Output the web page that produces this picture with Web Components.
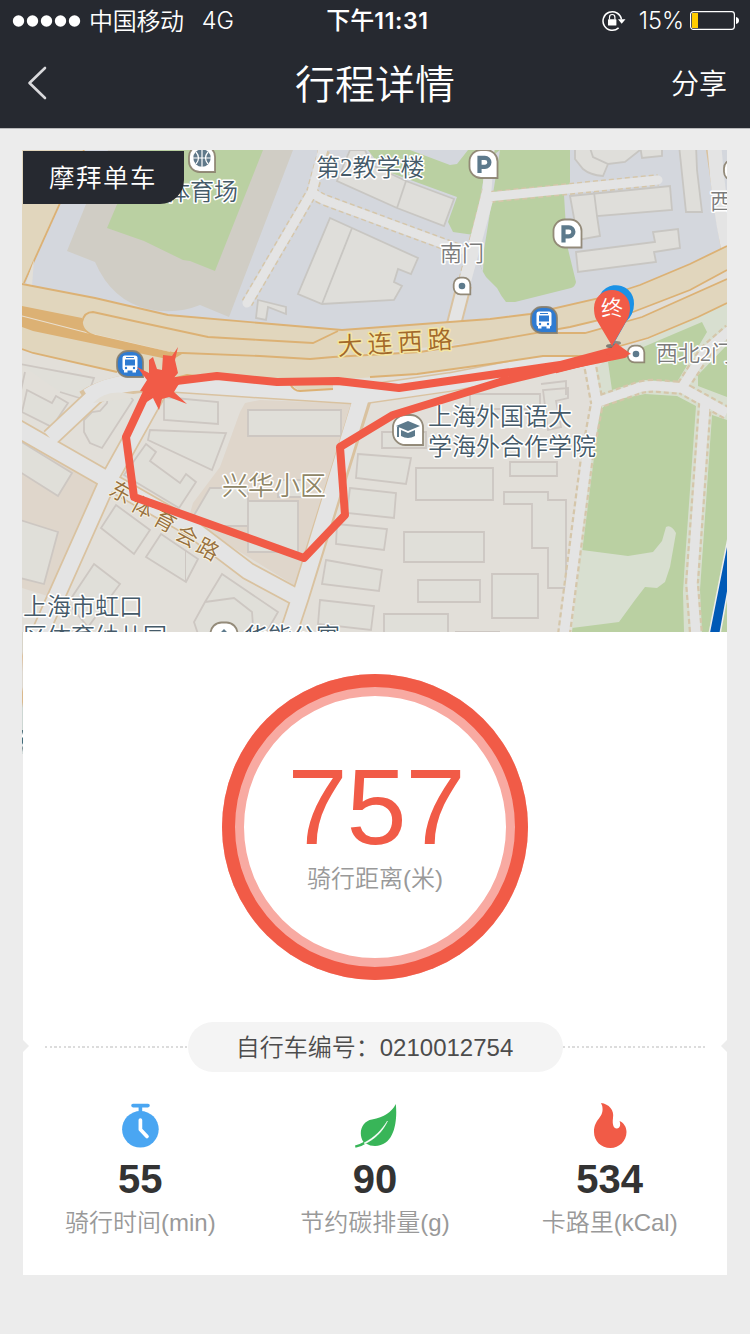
<!DOCTYPE html>
<html lang="zh-CN">
<head>
<meta charset="utf-8">
<title>行程详情</title>
<style>
html,body{margin:0;padding:0}
body{width:750px;height:1334px;overflow:hidden;background:#ececec;font-family:"Liberation Sans","Noto Sans CJK SC",sans-serif;font-weight:350}
</style>
</head>
<body>
<ride-page></ride-page>
<script>
const define = (name, html) => customElements.define(name, class extends HTMLElement {
  constructor() {
    super();
    const t = document.createElement('template');
    t.innerHTML = html;
    this.attachShadow({mode: 'open'}).appendChild(t.content.cloneNode(true));
  }
});

define('status-bar', `<style>
:host{display:grid;grid-template-columns:1fr auto 1fr;align-items:center;height:40px;color:#fff;font:400 23.5px/40px Inter,"Noto Sans CJK SC",sans-serif;padding:0 11px 0 12px}
.l,.r{display:flex;align-items:center;height:40px}
.r{justify-content:flex-end}
.cn{font-family:"Noto Sans CJK SC",sans-serif;font-weight:350;font-size:24px;margin:-2px 0 0 8px;letter-spacing:-.3px}
.net{margin-left:18px;font-weight:350;font-size:23.5px}
.time{font-weight:600;font-size:23px;transform:translateX(2px);letter-spacing:.65px;white-space:nowrap}
.time b{font:500 24px/38px "Noto Sans CJK SC",sans-serif;letter-spacing:0}
.pct{font-weight:350;margin:0 6px 0 13px}
svg{display:block;flex:none}
</style>
<div class="l"><svg width="69" height="12"><g fill="#fff"><circle cx="6.5" cy="6" r="5.7"/><circle cx="20.5" cy="6" r="5.7"/><circle cx="34.5" cy="6" r="5.7"/><circle cx="48.5" cy="6" r="5.7"/><circle cx="62.5" cy="6" r="5.7"/></g></svg><span class="cn">中国移动</span><span class="net">4G</span></div>
<div class="time"><b>下午</b>11:31</div>
<div class="r"><svg width="24" height="22" viewBox="0 0 24 22"><path d="M16.6 17.9A9.3 9.3 0 1 1 19.5 9.5" fill="none" stroke="#fff" stroke-width="1.5"/><path d="M16 9.2h7.5l-3.8 4.6z" fill="#fff"/><rect x="6" y="9.2" width="8.4" height="6.3" rx=".6" fill="#fff"/><path d="M7.5 9.5V7.2a2.7 2.7 0 0 1 5.4 0v2.3" fill="none" stroke="#fff" stroke-width="1.2"/></svg>
<span class="pct">15%</span>
<svg width="49" height="19" viewBox="0 0 49 19"><rect x=".6" y=".6" width="43.8" height="17.8" rx="2.8" fill="none" stroke="#fff" stroke-width="1.2"/><rect x="2" y="2" width="6" height="15" fill="#fc0"/><path d="M46 6q3 .7 3 3.5t-3 3.5z" fill="#fff"/></svg></div>`);

define('nav-bar', `<style>
:host{display:grid;grid-template-columns:1fr auto 1fr;align-items:center;height:88px;color:#fff;font-weight:350;font-family:"Noto Sans CJK SC",sans-serif;padding:0 23px 0 27px;border-bottom:1px solid #b8b8ba;box-sizing:border-box}
svg{display:block;transform:translateY(-1px)}
.t{font-size:40px;line-height:60px;transform:translate(-2px,-2px)}
.s{font-size:28px;line-height:60px;text-align:right;transform:translateY(-2px)}
</style><svg width="20" height="34" viewBox="0 0 20 34"><path d="M18 2L2.5 17L18 32" fill="none" stroke="#d9d9dc" stroke-width="2.6" stroke-linecap="round" stroke-linejoin="round"/></svg>
<div class="t"><slot name="title"></slot></div><div class="s"><slot name="action"></slot></div>`);

const P = (cx, cy, r, fill, inner) => {
  const k = r * .82, s = r - k;
  return `<g transform="translate(${cx} ${cy})"><path d="M${r} ${r}H${-s}A${k} ${k} 0 0 1 ${-r} ${s}V${-s}A${k} ${k} 0 0 1 ${-s} ${-r}H${s}A${k} ${k} 0 0 1 ${r} ${-s}Z" fill="${fill}" stroke="#8a7f6d" stroke-opacity=".9" stroke-width="1.8"/>${inner}</g>`;
};
const bus = '<rect x="-7.500" y="-8.500" width="15" height="15" rx="2.500" fill="#fff"/><rect x="-5" y="-4.500" width="10" height="6" fill="#2e7bd2"/><rect x="-4" y="-7" width="8" height="1" fill="#2e7bd2"/><circle cx="-4" cy="4" r="1.200" fill="#2e7bd2"/><circle cx="4" cy="4" r="1.200" fill="#2e7bd2"/><path d="M-6 6h3.500v2.500h-3.500zM2.500 6h3.500v2.500h-3.500z" fill="#fff"/>';
const parking = '<path d="M-4 9V-6.2H1.4a4.5 4.5 0 0 1 0 9H-4" fill="none" stroke="#5d7a8c" stroke-width="4.200"/>';
const chars = (s, pts, rot, dy) => [...s].map((c, i) => `<text text-anchor="middle" transform="translate(${pts[i]}) rotate(${rot})" y="${dy}">${c}</text>`).join('');

define('route-map', `<style>
:host{display:block;width:705px;height:482px;overflow:hidden}
svg{display:block}
text{font-family:"Noto Sans CJK SC",sans-serif;font-weight:350;font-size:24px;fill:#455a69;stroke:#fff;stroke-width:3px;stroke-linejoin:round;paint-order:stroke}
.num{font-family:"Liberation Serif",serif}
.b{fill:#dfdeda;stroke:#c8c6c2;stroke-width:1.8}
.h{fill:#e0dfd9;stroke:#cdc7c2;stroke-width:1.8}
.e{fill:none;stroke:#dcb174;stroke-width:1.8}
.c{fill:none;stroke:#d9c2a0}
.r{fill:none;stroke:#e4e4e4}
.d{fill:none;stroke:#d5c6aa;stroke-dasharray:5 3}
.g{fill:#bad0a2}
text.gray{fill:#7b7b7b;font-size:22px}
.road text{fill:#a3692a;font-size:25px;stroke:#f5e6a1}
.brown text{fill:#98713d;font-size:22px;stroke:#f5f0e2;stroke-width:2px}
</style>
<svg width="705" height="482" viewBox="22 150 705 482">
<rect x="22" y="150" width="705" height="482" fill="#e2dfd9"/>
<path d="M22 150H727V250L600 305L342 335L22 300Z" fill="#d4d7dd"/>
<path d="M22 150H84L24 283H22Z" fill="#e1d6bd"/>
<path d="M84 150L24 283" class="e"/><path d="M26 283L34 260L32 286Z" fill="#e2dfd8"/>
<path d="M108 150L67 251L95 262Q112 301 148 309Q175 315 200 305L229 317L293 150Z" fill="#d0cdc5"/>
<path class="g" d="M140 150L107 228L144 241L183 260L190 261L215 271L263 150Z"/>
<path class="g" d="M368 150H410L450 165L457 164L468 150H570V182L564 195L567 245L576 282Q575 287 571 288L515 302H506Q501 296 497 288L486 277Q476 262 474 235L453 232L448 222L457 197L383 170Z"/>
<path d="M474 232L487 160L500 150L484 250L483 272L474 250Z" fill="#d4d7dd"/>
<!-- campus paths -->
<g class="d" stroke-width="12"><path d="M324 150L312 192L247 303M312 192Q318 198 330 202L460 250M488 190L463 285M490 197L658 180"/></g>
<g class="r" stroke-width="9" stroke-linecap="round"><path d="M324 145L312 192L247 303M312 192Q318 198 330 202L460 250M490 150L487 190L463 285M488 197L658 180"/></g>
<path d="M464 285L453 328" class="c" stroke-width="16"/><path d="M487 200L464 285L453 328" class="r" stroke-width="12"/>
<path d="M706 140L724 260" class="c" stroke-width="3"/><path d="M714 140Q718 200 728 248" class="r" stroke-width="14"/>
<!-- campus buildings -->
<path class="b" d="M350 150L337 181L397 208L444 226L454 199L406 181L372 165L365 150ZM397 208L406 181"/>
<path class="b" d="M330 218L418 258L411 274L398 269L394 282L402 286L394 300L322 304L298 294ZM352 228L322 304"/>
<path class="b" d="M258 300L286 307V314L268 307L266 320L256 318Z"/>
<path class="b" d="M575 145V159L583 169Q590 175 603 176L608 164L593 157L589 145ZM589 145L593 157L608 164L625 162L640 150V145M640 145L642 158L662 156V145M679 145L686 212H702L697 170L696 145"/>
<path class="b" d="M570 196L670 186L672 210L597 216L600 236L578 240ZM594 192L597 216"/>
<path class="b" d="M576 252L655 242L653 232L678 229L680 248L654 252L656 262L578 272Z"/>
<!-- residential blocks -->
<path fill="#dfd6cb" d="M260 400L245 403L240 412L220 467L193 503L188 520L297 587L354 404Z"/>
<path fill="#dfd6cb" d="M22 440L100 483L54 598L22 588Z"/>
<g class="h"><path d="M248 410H341V436H248ZM248 501H298V552H248ZM278 480H302V497H278ZM193 517L210 488H248V526H193Z"/>
<path d="M358 454L411 458L406 484L356 478ZM350 488L396 493L394 518L347 513ZM337 524L387 529L384 550L336 544ZM326 560L382 570L379 591L322 584ZM320 600L374 606L371 630L318 624Z"/>
<path d="M416 468H493V500H416ZM404 532H484V562H404ZM418 580H480V602H418ZM384 614H448V640H384ZM382 432H426V448H382ZM510 462H557V476H510ZM492 574H538V618H492ZM470 394H540V409H470ZM455 632H500"/>
<path d="M504 492H548V500H566V588H548V548H532V504H504ZM543 390L548 430L561 427L556 401L568 398V388ZM541 384L566 381V395"/>
<path d="M27 390L52 403L56 396L68 403L52 427L22 412ZM84 420L92 412L100 411L107 403L108 393L130 396L133 400L102 448L90 443L84 432ZM164 397L218 402V424L164 420ZM150 430L226 433L212 470L148 440ZM146 444L156 452L150 461L180 483L186 474L196 482L179 508L124 475Z"/>
<path d="M116 505L150 530L134 554L101 528ZM161 534L198 559L186 582L146 557ZM20 441L72 473L58 496L20 472ZM20 520L58 532L44 584L20 578ZM94 564L120 584L88 627L68 603ZM222 574L278 612L262 640H200L194 622L205 602ZM205 602L234 598L252 612L254 640M20 364L94 378L86 400L60 392M25 372L20 395"/><path d="M185.500 551V581" stroke-width="1"/></g>
<!-- east park -->
<path fill="#d8dfd0" d="M608 358L727 303V632H572L596 410L595 370Z"/>
<path class="g" d="M608 362L702 322L707 332L677 382L645 380L612 390ZM698 375L727 345V397L698 386ZM600 410L610 401L645 394L677 396L696 406L685 560L683 592L684 632H572Z"/>
<path class="g" d="M712 415L727 420V632H702L700 590Z"/>
<path fill="#d8dfd0" d="M582 550L628 556L653 552L662 541L666 527Q671 524 676 533L670 567L665 582L657 588L645 587L635 600L619 622L572 628Z"/>
<g class="d" stroke-width="14"><path d="M564 634L587 457L597 403L590 365M595 403L635 389Q645 385 658 386L682 388L727 413M683 386L705 352L730 330M705 403L692 583L696 634"/></g>
<g class="r" stroke-width="9.5"><path d="M564 634L587 457L597 403L590 365M595 403L635 389Q645 385 658 386L682 388L727 413M683 386L705 352L730 330M705 403L692 583L696 634"/></g>
<path d="M728 538L709 634H720L728 590Z" fill="#0059b6" stroke="#eee" stroke-width="1.5"/>
<!-- side streets -->
<g class="c" stroke-width="19"><path d="M28 660L106 485L160 388M15 427L106 479L190 527L248 571L300 599M50 438L100 391M286 640L300 598L362 400"/></g>
<path class="c" stroke-width="20" d="M85 400Q110 383 160 382L250 388L360 395L450 382L605 352"/>
<g class="r" stroke-width="15.5"><path d="M28 660L106 485L160 388M15 427L106 479L190 527L248 571L300 599M50 438L100 391M286 640L300 598L362 395"/></g>
<path class="r" stroke-width="17" d="M88 397Q115 380 160 382L250 388L360 395L450 382L605 352"/>
<path d="M93 403Q105 390 125 393L150 396L130 398Z" fill="#e2dfd8"/>
<!-- main road -->
<path fill="#e1d6bd" d="M22 284L95 298L168 315L260 323L342 330L490 319L530 314L600 298L640 285L690 264L727 246V303L698 317L648 338L613 348L590 355L543 356L490 364L417 374L333 380L333 389L300 391L290 384L187 375L170 378L117 372L33 353L22 349Z"/>
<path fill="#e1ddd6" d="M490 341L570 327L633 312L690 290L727 270V279L642 317L585 333H540ZM400 350L490 341L430 352L340 357Z"/>
<path fill="#dcb174" d="M22 306L82 318V326Q84 333 96 336L182 354L172 360L33 331L22 327Z"/>
<path fill="none" stroke="#e9dfcf" stroke-width="1.2" d="M22 316L96 335L170 352"/>
<path class="e" d="M22 284L95 298L168 315L260 323L342 330L490 319L530 314L600 298L640 285L690 264L727 246M22 349L33 353L117 372M160 382L187 375L205 377M290 384Q294 391 300 391L333 389M370 377L417 374L490 364L543 356H590L613 348L648 338L698 317L727 303"/>
<path class="e" d="M96 336Q82 332 82 322Q84 312 93 312L143 323L208 337L260 340L313 343L338 331M96 336L170 353L183 353L260 356L310 359L333 357L420 352L490 341L570 327L633 312L690 290L727 270M558 333H585L642 317L727 279"/>
<!-- map labels -->
<text x="166" y="200">体育场</text><text x="316" y="176">第<tspan class="num" font-size="25">2</tspan>教学楼</text>
<text class="gray" x="440" y="261">南门</text><text class="gray" x="710" y="209">西</text><text class="gray" x="656" y="361">西北<tspan class="num">2</tspan>门</text>
<g class="road">${chars('大连西路', ['350 345', '380 343', '410 341', '440 339'], -3, 9.5)}</g>
<g class="brown">${chars('东体育会路', ['121 492', '143 507', '165 521', '187 536', '208 549'], 29, 8)}</g>
<text x="222" y="495" style="font-size:26px;fill:#8f8667">兴华小区</text>
<text x="428" y="425">上海外国语大</text><text x="428" y="455">学海外合作学院</text>
<text x="23" y="615">上海市虹口</text><text x="23" y="645">区体育幼儿园</text><text x="244" y="645">华能公寓</text>
${P(202,159,13,'#fff','<circle cx="0" cy="-1" r="8.7" fill="#60798a"/><path d="M0-10V8M-9-1H9M-6-7Q-1-1-6 5M6-7Q1-1 6 5" stroke="#fff" stroke-width="1.2" fill="none"/>')}
${P(483.500,164,14,'#fff',parking)}${P(567.500,233.500,14,'#fff',parking)}
${P(130,364,13,'#2e7bd2',bus)}${P(544,320,13,'#2e7bd2',bus)}
${P(462,286,8.3,'#fff','<circle r="3.3" fill="#5d7a8c"/>')}${P(636,354,8.3,'#fff','<circle r="3.3" fill="#5d7a8c"/>')}${P(734,170,10,'#fff','')}
${P(408,430,15,'#fff','<path d="M-12-4L0-9L12-4L0 1ZM-7 0L0 3L7 0V6Q0 10-7 6ZM-11-3H-9V7H-11Z" fill="#5d7a8c"/>')}
${P(224,636,13.500,'#fff','<path d="M-7 0L0-7L7 0V4L0-2L-7 4Z" fill="#5d7a8c"/>')}
<!-- travelled route -->
<g fill="none" stroke="#f15b47" stroke-width="8" stroke-linejoin="round"><path d="M160 383L217 376L277 382L338 381L399 388L455 380L560 365L616 350L624 354L575 364L500 382L393 415L340 447L345 515L304 558L134 497L126 437L155 375"/><path d="M555 369L614 354" stroke-width="9"/></g>
<path fill="#f15b47" d="M137 367L149 373L149 360L153 357L157 369L162 370L163 355L172 356L178 347L175 360L178 373L172 380L181 381L177 387L174 392L187 404L169 397L162 399L159 410L153 398L142 405L150 393L140 391L147 380Z"/>
<ellipse cx="611" cy="346" rx="5" ry="2" fill="#555" opacity=".7"/><ellipse cx="616" cy="343" rx="5" ry="2" fill="#555" opacity=".6"/>
<path d="M613 345L626 322Q634 314 634 304A18 18 0 1 0 599 309Z" fill="#1b92e6"/>
<path d="M612 346L596 319Q594 315 594 308A18 18 0 0 1 630 308Q630 315 627 320Z" fill="#f15b47"/>
<path d="M616 343L631 354L618 358L606 354Z" fill="#f15b47"/>
<text x="612" y="316" text-anchor="middle" transform="rotate(-4 612 308)" style="font-size:22px;fill:#fff;stroke:none">终</text>
</svg>`);

define('brand-tag', `<style>
:host{display:block;box-sizing:border-box;width:161px;height:53px;background:#262930;color:#fff;border-radius:0 0 24px 0;font:350 25.5px/50px "Noto Sans CJK SC",sans-serif;letter-spacing:1.5px;padding-left:26px;white-space:nowrap}
</style><slot></slot>`);

define('distance-ring', `<style>
:host{display:flex;flex-direction:column;align-items:center;box-sizing:border-box;width:306px;height:306px;border-radius:50%;box-shadow:inset 0 0 0 13px #f15b47,inset 0 0 0 22px #f8aaa2;padding-top:88px}
.n{font:400 108px/90px "Liberation Sans",sans-serif;letter-spacing:-1px;color:#f15b47;height:90px;transform:translateX(1px)}
.l{font:350 24px/36px "Liberation Sans","Noto Sans CJK SC",sans-serif;color:#999;margin-top:9px}
</style><div class="n"><slot name="value"></slot></div><div class="l"><slot></slot></div>`);

define('bike-divider', `<style>
:host{display:flex;align-items:center;height:50px;justify-content:space-between}
.dots{flex:1;height:2px;background:repeating-linear-gradient(90deg,#dcdcdc 0 2.3px,transparent 2.3px 4.667px)}
.pill{width:375px;height:50px;border-radius:25px;background:#f4f4f4;color:#4c4c4c;font-size:24px;line-height:52px;text-align:center;white-space:nowrap;text-indent:-2px}
.nl,.nr{width:6px;height:12px;background:#ececec;transform:translateY(-1px)}
.nl{clip-path:polygon(0 0,100% 50%,0 100%);margin-right:16px}
.nr{clip-path:polygon(100% 0,0 50%,100% 100%);margin-left:15px}
</style><i class="nl"></i><i class="dots"></i><div class="pill"><slot></slot></div><i class="dots"></i><i class="nr"></i>`);

define('ride-stat', `<style>
:host{display:flex;flex-direction:column;align-items:center}
.i{height:48px;display:flex}
.v{font:700 40px/46px "Liberation Sans",sans-serif;color:#333;margin-top:7px}
.l{font-size:24px;line-height:36px;color:#999;margin-top:3px;white-space:nowrap}
</style><div class="i"><slot name="icon"></slot></div><div class="v"><slot name="value"></slot></div><div class="l"><slot></slot></div>`);

define('ride-page', `<style>
:host{display:flex;flex-direction:column;width:750px;height:1334px;background:#ececec}
header{background:#262930;height:129px;flex:none;display:flex;flex-direction:column}
nav-bar{height:89px}
main{width:704px;margin:21px 0 0 23px;height:1125px;background:#fff;display:flex;flex-direction:column;position:relative}
route-map{margin-left:-1px;flex:none}
brand-tag{position:absolute;left:0;top:1px}
distance-ring{margin:42px auto 0;flex:none}
bike-divider{margin-top:42px;flex:none}
.stats{display:grid;grid-template-columns:repeat(3,1fr);margin-top:29px}
svg{display:block}
.edge{position:absolute;left:-1px;top:482px;width:1px;height:122px;background:linear-gradient(#d8d4c8 0 20px,#ddc09c 24px,#ddd8cf 40px 55px,#dab98c 60px 70px,#cdd7d3 76px 98px,#50727c 98px 100px,#fff 103px 105px,#416b79 106px 111px,#fff 113px,#758b91 116px,#d5dddc 120px)}
</style>
<header><status-bar></status-bar><nav-bar><span slot="title">行程详情</span><span slot="action">分享</span></nav-bar></header>
<main><route-map></route-map><brand-tag>摩拜单车</brand-tag><i class="edge"></i>
<distance-ring><span slot="value">757</span>骑行距离(米)</distance-ring>
<bike-divider>自行车编号：0210012754</bike-divider>
<section class="stats">
<ride-stat><svg slot="icon" width="40" height="48" viewBox="0 0 40 48"><circle cx="20.400" cy="28.300" r="18.300" fill="#4aa6f2"/><path d="M13 4.600H28M20.400 5V12" stroke="#4aa6f2" stroke-width="3.600" stroke-linecap="round"/><path d="M20.400 19V28.500L27 35.500" fill="none" stroke="#fff" stroke-width="3.700" stroke-linecap="round" stroke-linejoin="round"/></svg><span slot="value">55</span>骑行时间(min)</ride-stat>
<ride-stat><svg slot="icon" width="44" height="48" viewBox="0 0 44 48"><path d="M42.800 3C44.500 19 42 45 22 45Q17 45 13 42.500Q8 46 2.500 46.800L2 44.500Q6.500 43.500 10.500 41C4.500 32 9 20 19 18.500Q37 15 42.800 3Z" fill="#38b558"/><path d="M11 42C22 36 28 30 34.500 20C29 32 21 38 12 42.800Z" stroke="#fff" stroke-width=".5" fill="#fff"/></svg><span slot="value">90</span>节约碳排量(g)</ride-stat>
<ride-stat><svg slot="icon" width="40" height="48" viewBox="0 0 40 48"><path d="M11 2C19 3 24.500 9 23 17C22 24 24 28 27 27.500C30 27 31 24 29.500 20C34 22 36.500 26 36.500 31C36.500 40 29 47 20.500 47C11 47 4 40 4 31C4 18 13.500 17 12.500 7Q12.500 5 11 2Z" fill="#f15b47"/></svg><span slot="value">534</span>卡路里(kCal)</ride-stat>
</section></main>`);
</script>
</body>
</html>
